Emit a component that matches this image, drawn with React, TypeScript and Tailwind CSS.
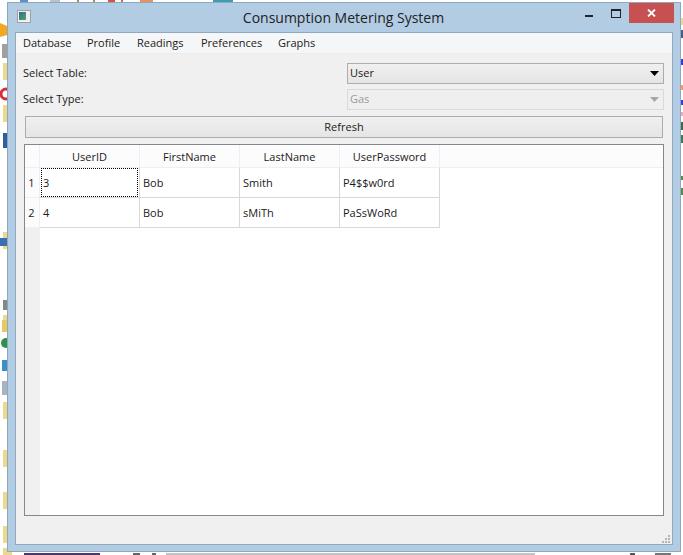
const font = { fontFamily: '"Open Sans", "Noto Sans", sans-serif' };

const columns = ["UserID", "FirstName", "LastName", "UserPassword"];
const rows = [
  ["3", "Bob", "Smith", "P4$$w0rd"],
  ["4", "Bob", "sMiTh", "PaSsWoRd"],
];
const menus = ["Database", "Profile", "Readings", "Preferences", "Graphs"];

function Arrow({ dim }: { dim?: boolean }) {
  return (
    <svg width="9" height="5" viewBox="0 0 9 5" className="mr-[4px]">
      <path d="M0 0h9L4.5 5z" fill={dim ? "#a6a6a6" : "#000"} />
    </svg>
  );
}

// bits of the desktop icons that show round the window
function Desktop() {
  const folders = [63, 105, 232, 315, 402, 450, 492, 526];
  const top: [number, number, string][] = [
    [20, 8, "#5b8fc9"],
    [50, 10, "#b9c2cc"],
    [77, 2, "#b08a5a"],
    [93, 2, "#b08a5a"],
    [108, 7, "#d9503f"],
    [121, 2, "#c96a5a"],
    [140, 13, "#e8935a"],
    [213, 20, "#3f9db3"],
  ];
  const right: [number, number, string][] = [
    [18, 7, "#e9d9a0"],
    [30, 8, "#4a5a8a"],
    [59, 6, "#3a3ae0"],
    [85, 5, "#f0a070"],
    [100, 5, "#3a3ae0"],
    [112, 4, "#f0a8c0"],
    [122, 8, "#3f6a4a"],
    [135, 8, "#3f7a5a"],
    [176, 4, "#5a8a4a"],
    [188, 7, "#5a8a4a"],
  ];
  return (
    <svg width="683" height="555" className="absolute inset-0">
      {folders.map((y) => (
        <rect key={y} x="3" y={y} width="4" height="17" fill="#ecd98c" />
      ))}
      <path d="M0 23l7 3v9l-7 2z" fill="#f2a71e" />
      <rect x="2" y="44" width="5" height="14" fill="#a0a0a0" />
      <circle cx="6" cy="94" r="5" fill="none" stroke="#d6303a" strokeWidth="3" />
      <rect x="3" y="133" width="4" height="15" fill="#2f5f9e" />
      <rect x="0" y="238" width="7" height="8" fill="#3c6fb0" />
      <rect x="3" y="300" width="4" height="10" fill="#808a80" />
      <rect x="2" y="320" width="5" height="12" fill="#e8c860" />
      <circle cx="6" cy="343" r="5" fill="#2f8f4a" />
      <rect x="2" y="360" width="5" height="11" fill="#3d8fc9" />
      <rect x="2" y="381" width="5" height="14" fill="#a8b4bf" />
      {top.map(([x, w, c]) => (
        <rect key={x} x={x} y="0" width={w} height="2" fill={c} />
      ))}
      {right.map(([y, h, c]) => (
        <rect key={y} x="681" y={y} width="2" height={h} fill={c} />
      ))}
      <rect x="3" y="548" width="9" height="7" fill="#ecd98c" />
      <rect x="24" y="553" width="76" height="2" fill="#4a3a6a" />
      <rect x="133" y="553" width="7" height="2" fill="#666" />
      <rect x="152" y="553" width="4" height="2" fill="#666" />
      <rect x="166" y="553" width="369" height="2" fill="#c4c4c4" />
      <rect x="630" y="553" width="5" height="2" fill="#555" />
      <rect x="655" y="553" width="16" height="2" fill="#777" />
    </svg>
  );
}

export default function App() {
  return (
    <div className="relative w-[683px] h-[555px] overflow-hidden bg-white pl-[7px] pt-[2px]" style={font}>
      <Desktop />
      <div className="relative w-[674px] h-[550px] border border-[#8ea8c0] bg-[#b2cce4] flex flex-col px-[7px] pb-[6px]">
        {/* Title bar */}
        <div className="relative h-[29px] shrink-0 flex items-center justify-center">
          <div className="absolute left-[2px] top-[7px] w-[14px] h-[13px] bg-[#f0f0f0] border border-[#a0a0a0] p-[1px] flex">
            <div className="w-[7px] h-[8px] bg-gradient-to-br from-[#2c6d8c] to-[#5aa26a]" />
          </div>
          <span className="text-[14px] text-[#222] ml-[-1px] mt-[-1px]">Consumption Metering System</span>
          <div className="absolute right-[-1px] top-0 flex items-start">
            <div className="w-[8px] h-[2px] bg-[#222] mt-[12px] mr-[18px]" />
            <div className="w-[10px] h-[9px] border border-[#222] border-t-[2px] mt-[6px] mr-[8px]" />
            <div className="w-[45px] h-[20px] bg-[#c75050] flex items-center justify-center">
              <svg width="9" height="8" viewBox="0 0 9 8">
                <path d="M1 0.5l7 7M8 0.5l-7 7" stroke="#fff" strokeWidth="1.8" />
              </svg>
            </div>
          </div>
        </div>

        {/* Client area */}
        <div className="flex-1 flex flex-col border border-[#8ea8c0] bg-[#f0f0f0] text-[11px] leading-[16px] text-[#1a1a1a]">
          <div className="h-[21px] shrink-0 bg-[#f5f6f7] border-b border-[#e9ebed] flex items-center pl-[7px]">
            <span className="w-[64px]">{menus[0]}</span>
            <span className="w-[50px]">{menus[1]}</span>
            <span className="w-[64px]">{menus[2]}</span>
            <span className="w-[77px]">{menus[3]}</span>
            <span>{menus[4]}</span>
          </div>

          <div className="flex-1 flex flex-col pl-[8px] pr-[8px] pt-[9px] pb-[28px]">
            <div className="h-[21px] flex items-center">
              <span className="w-[323px] ml-[-1px] mt-[-2px]">Select Table:</span>
              <div className="ml-[1px] flex-1 h-[21px] border border-[#adadad] bg-gradient-to-b from-[#f0f0f0] to-[#e5e5e5] flex items-center justify-between pl-[2px]">
                <span className="mt-[-1px]">User</span>
                <Arrow />
              </div>
            </div>
            <div className="h-[21px] mt-[5px] flex items-center">
              <span className="w-[323px] ml-[-1px] mt-[-2px]">Select Type:</span>
              <div className="ml-[1px] flex-1 h-[21px] border border-[#d9d9d9] bg-[#efefef] flex items-center justify-between pl-[2px] text-[#9a9a9a]">
                <span className="mt-[-1px]">Gas</span>
                <Arrow dim />
              </div>
            </div>
            <div className="h-[22px] mt-[6px] ml-[1px] mr-[1px] border border-[#adadad] bg-gradient-to-b from-[#f0f0f0] to-[#e5e5e5] flex items-center justify-center">
              Refresh
            </div>

            {/* Table */}
            <div className="flex-1 mt-[6px] border border-[#828790] bg-white flex flex-col">
              <div className="h-[23px] shrink-0 flex bg-[#fcfcfd] border-b border-[#e9f0f8]">
                <div className="w-[15px] border-r border-[#e9f0f8]" />
                {columns.map((c) => (
                  <div key={c} className="w-[100px] flex items-center justify-center border-r border-[#e9f0f8] pt-[1px]">
                    {c}
                  </div>
                ))}
              </div>
              <div className="flex-1 flex">
                <div className="w-[15px] shrink-0 bg-[#f0f0f0] flex flex-col">
                  {rows.map((r, i) => (
                    <div key={r[0]} className="h-[30px] bg-[#fcfcfd] border-b border-r border-[#e9f0f8] flex items-center justify-center pr-[1px]">
                      {i + 1}
                    </div>
                  ))}
                </div>
                <div className="flex flex-col">
                  {rows.map((r, ri) => (
                    <div key={r[0]} className="h-[30px] flex">
                      {r.map((cell, ci) => (
                        <div key={ci} className="relative w-[100px] h-[30px] border-b border-r border-[#d9d9d9] flex items-center pl-[3px]">
                          {cell}
                          {ri === 0 && ci === 0 && (
                            <div className="absolute left-[1px] top-[0px] w-[97px] h-[29px] border border-dotted border-black" />
                          )}
                        </div>
                      ))}
                    </div>
                  ))}
                </div>
              </div>
            </div>
          </div>

          {/* Size grip */}
          <div className="absolute right-[10px] bottom-[8px] grid grid-cols-3 gap-[1px] w-[8px]">
            {[0, 0, 1, 0, 1, 1, 1, 1, 1].map((on, i) => (
              <div key={i} className={on ? "w-[2px] h-[2px] bg-[#b4b4b4]" : "w-[2px] h-[2px]"} />
            ))}
          </div>
        </div>
      </div>
    </div>
  );
}
